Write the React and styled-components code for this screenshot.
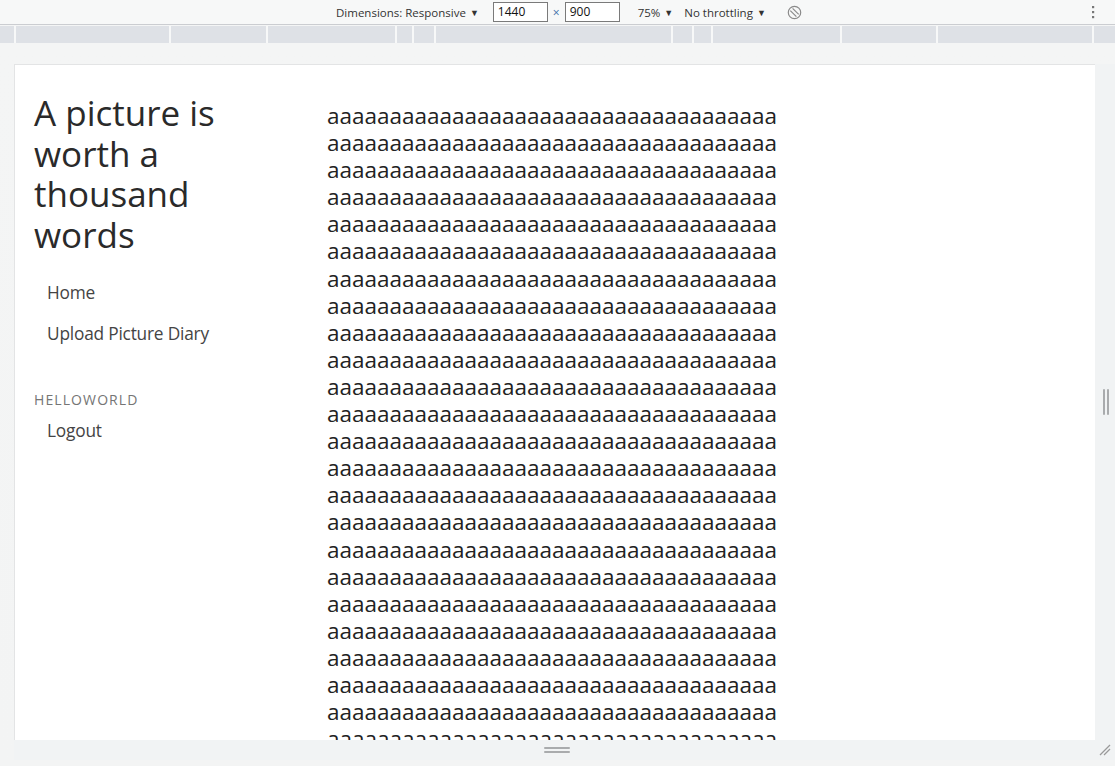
import React from "react";
import styled, { createGlobalStyle } from "styled-components";

const GlobalStyle = createGlobalStyle`
  html, body { margin: 0; padding: 0; }
  body {
    background: #f3f4f4;
    font-family: "Open Sans", "Noto Sans", sans-serif;
    overflow: hidden;
    width: 1115px;
    height: 766px;
  }
  * { box-sizing: border-box; }
`;

const Shell = styled.div`
  display: flex;
  flex-direction: column;
  width: 1115px;
  height: 766px;
`;

const Toolbar = styled.div`
  height: 25px;
  flex: none;
  background: #f7f8f8;
  border-bottom: 1px solid #cbcdd1;
  display: flex;
  align-items: center;
  font-family: "Open Sans", "Noto Sans", sans-serif;
  font-size: 11.5px;
  color: #333;
`;

const ToolText = styled.span`
  margin-left: ${(p) => p.$ml}px;
  white-space: nowrap;
  display: inline-flex;
  align-items: center;
  gap: 4px;
`;

const Caret = styled.span`
  font-size: 9px;
  color: #333;
`;

const DimInput = styled.div`
  margin-left: ${(p) => p.$ml}px;
  width: 55px;
  height: 20px;
  border: 1px solid #7a7a7a;
  background: #fff;
  font-size: 12px;
  color: #111;
  padding-left: 4px;
  line-height: 18px;
`;

const Times = styled.span`
  margin-left: 5px;
  color: #3b6ea8;
  font-size: 12px;
`;

const IconWrap = styled.span`
  margin-left: ${(p) => p.$ml}px;
  display: inline-flex;
  align-items: center;
`;

const Gap = styled.div`
  height: 1px;
  flex: none;
  background: #f4f5f5;
`;

const Ruler = styled.div`
  height: 17px;
  flex: none;
  background: #dee1e6;
  display: flex;
`;

const Seg = styled.div`
  width: ${(p) => p.$w}px;
  flex: none;
  height: 100%;
  border-right: 2px solid #f7f8f8;
  &:last-child { border-right: none; flex: 1; }
`;

const Workspace = styled.div`
  flex: 1;
  padding: 21px 0 0 14px;
  background: linear-gradient(#f4f5f5, #f3f4f4);
`;

const Device = styled.div`
  display: grid;
  grid-template-columns: 1081px 20px;
  grid-template-rows: 676px 20px;
`;

const Page = styled.div`
  background: #fff;
  border-left: 1px solid #e3e4e5;
  border-top: 1px solid #e3e4e5;
  overflow: hidden;
  display: flex;
  color: #333;
  font-family: "Open Sans", "Noto Sans", sans-serif;
`;

const RightStrip = styled.div`
  background: #f1f3f4;
  display: flex;
  align-items: center;
  justify-content: center;
  gap: 2px;
  padding-left: 1px;
`;

const VLine = styled.span`
  width: 2px;
  height: 26px;
  background: #a9abad;
  border-radius: 1px;
`;

const BottomStrip = styled.div`
  background: #f1f3f4;
  display: flex;
  flex-direction: column;
  align-items: center;
  justify-content: center;
  gap: 2px;
  padding-left: 5px;
`;

const HLine = styled.span`
  width: 26px;
  height: 2px;
  background: #a9abad;
  border-radius: 1px;
`;

const Corner = styled.div`
  background: #f1f3f4;
  display: flex;
  align-items: center;
  justify-content: center;
`;

const Sidebar = styled.aside`
  width: 312px;
  flex: none;
  padding: 28px 0 0 19px;
`;

const Title = styled.h1`
  margin: 0 0 17px 0;
  width: 240px;
  font-size: 35px;
  line-height: 40.6px;
  font-weight: 500;
  color: #2a2a2a;
`;

const NavList = styled.nav`
  display: flex;
  flex-direction: column;
  margin-bottom: ${(p) => p.$mb || 0}px;
`;

const NavLink = styled.a`
  display: block;
  padding: 0 13px;
  font-size: 17.3px;
  line-height: 41px;
  color: #444;
  text-decoration: none;
  letter-spacing: -0.2px;
`;

const UserLabel = styled.div`
  font-size: 14px;
  line-height: 20px;
  letter-spacing: 1.1px;
  color: #757575;
  text-transform: uppercase;
`;

const Main = styled.main`
  flex: 1;
  padding-top: 37px;
`;

const Body = styled.p`
  margin: 0;
  width: 456px;
  font-size: 22.5px;
  line-height: 27.1px;
  font-weight: 500;
  color: #222;
  word-break: break-all;
`;

const segments = [16, 155, 97, 129, 17, 22, 237, 21, 19, 129, 96, 156, 21];

export default function App() {
  const text = "a".repeat(36 * 30);
  return (
    <Shell>
      <GlobalStyle />
      <Toolbar>
        <ToolText $ml={336}>
          Dimensions: Responsive <Caret>▼</Caret>
        </ToolText>
        <DimInput $ml={14}>1440</DimInput>
        <Times>×</Times>
        <DimInput $ml={5}>900</DimInput>
        <ToolText $ml={18}>
          75% <Caret>▼</Caret>
        </ToolText>
        <ToolText $ml={11}>
          No throttling <Caret>▼</Caret>
        </ToolText>
        <IconWrap $ml={21}>
          <svg width="15" height="15" viewBox="0 0 15 15">
            <circle cx="7.5" cy="7.5" r="6.2" fill="none" stroke="#8a8a8a" strokeWidth="1.2" />
            <line x1="3.3" y1="5.6" x2="9.4" y2="11.7" stroke="#8a8a8a" strokeWidth="1.2" />
            <line x1="5.6" y1="3.3" x2="11.7" y2="9.4" stroke="#8a8a8a" strokeWidth="1.2" />
          </svg>
        </IconWrap>
        <IconWrap $ml={289}>
          <svg width="4" height="14" viewBox="0 0 4 14">
            <rect x="1" y="1" width="2.2" height="2.2" fill="#777" />
            <rect x="1" y="6" width="2.2" height="2.2" fill="#777" />
            <rect x="1" y="11" width="2.2" height="2.2" fill="#777" />
          </svg>
        </IconWrap>
      </Toolbar>
      <Gap />
      <Ruler>
        {segments.map((w, i) => (
          <Seg key={i} $w={w} />
        ))}
      </Ruler>
      <Workspace>
        <Device>
          <Page>
            <Sidebar>
              <Title>A picture is worth a thousand words</Title>
              <NavList $mb={36}>
                <NavLink href="#">Home</NavLink>
                <NavLink href="#">Upload Picture Diary</NavLink>
              </NavList>
              <UserLabel>helloworld</UserLabel>
              <NavList>
                <NavLink href="#">Logout</NavLink>
              </NavList>
            </Sidebar>
            <Main>
              <Body>{text}</Body>
            </Main>
          </Page>
          <RightStrip>
            <VLine />
            <VLine />
          </RightStrip>
          <BottomStrip>
            <HLine />
            <HLine />
          </BottomStrip>
          <Corner>
            <svg width="14" height="14" viewBox="0 0 14 14">
              <line x1="2" y1="12" x2="12" y2="2" stroke="#9a9a9a" strokeWidth="1.2" />
              <line x1="6" y1="12" x2="12" y2="6" stroke="#9a9a9a" strokeWidth="1.2" />
            </svg>
          </Corner>
        </Device>
      </Workspace>
    </Shell>
  );
}
